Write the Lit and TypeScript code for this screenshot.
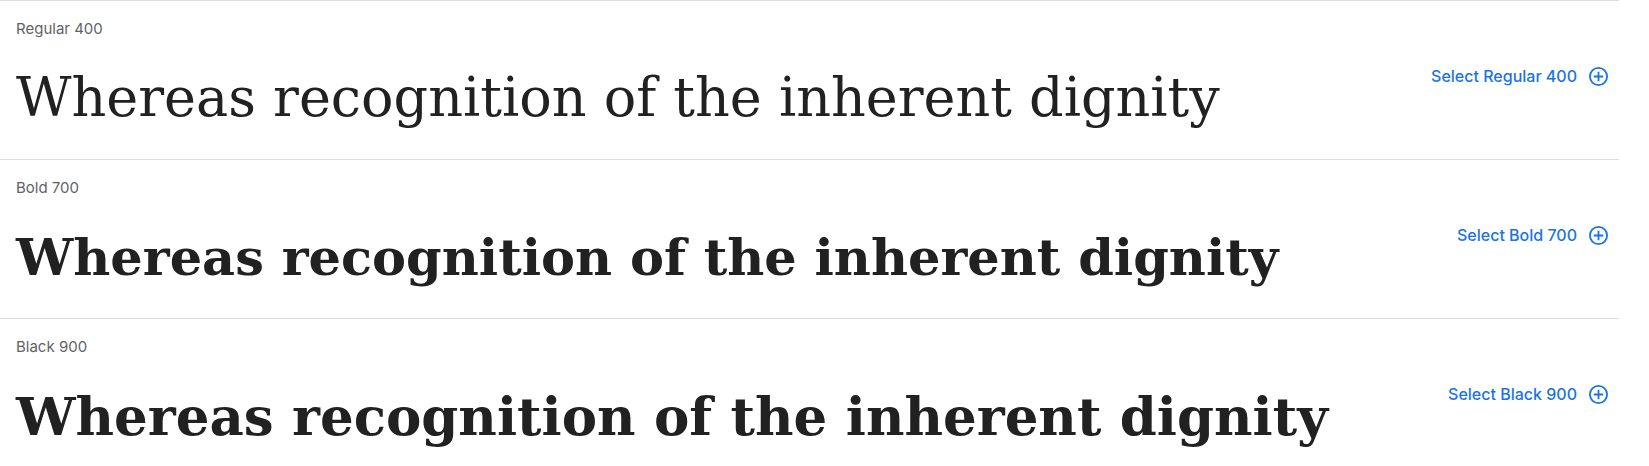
import { LitElement, html, css } from "lit";
import { customElement } from "lit/decorators.js";

interface FontStyle {
  name: string;
  weight: number;
}

const STYLES: FontStyle[] = [
  { name: "Regular", weight: 400 },
  { name: "Bold", weight: 700 },
  { name: "Black", weight: 900 },
];

@customElement("app-root")
export class AppRoot extends LitElement {
  static styles = css`
    :host {
      display: block;
      background: #fff;
      font-family: Inter, sans-serif;
    }
    .list {
      margin: 0 30px 0 0;
      padding: 0;
      list-style: none;
    }
    .row {
      display: flex;
      align-items: flex-start;
      justify-content: space-between;
      padding: 16px 11px 19px 16px;
      border-top: 1px solid #dadce0;
    }
    .row:last-child {
      padding-bottom: 0;
    }
    .name {
      margin: 0;
      font-size: 15px;
      font-weight: 400;
      line-height: 24px;
      color: #5f6368;
    }
    .sample {
      margin: 15px 0 0;
      font-family: "DejaVu Serif", serif;
      font-size: 54px;
      line-height: 84px;
      white-space: nowrap;
      color: #212121;
    }
    .w400 {
      font-weight: 400;
    }
    .w700 {
      font-size: 51px;
      font-weight: 700;
    }
    .w900 {
      font-size: 53px;
      font-weight: 900;
    }
    .select {
      display: flex;
      align-items: center;
      gap: 12px;
      margin-top: 47px;
      padding: 0;
      border: 0;
      background: none;
      font: 500 16px/24px Inter, sans-serif;
      white-space: nowrap;
      color: #1a73e8;
      cursor: pointer;
    }
    .icon {
      display: block;
      width: 19px;
      height: 19px;
    }
  `;

  render() {
    return html`
      <ul class="list">
        ${STYLES.map(
          (s) => html`
            <li class="row">
              <div>
                <h2 class="name">${s.name} ${s.weight}</h2>
                <p class="sample w${s.weight}">Whereas recognition of the inherent dignity</p>
              </div>
              <button class="select" type="button">
                <span>Select ${s.name} ${s.weight}</span>
                <svg class="icon" viewBox="0 0 19 19" fill="none" stroke="currentColor" aria-hidden="true">
                  <circle cx="9.5" cy="9.5" r="8.6" stroke-width="1.8" />
                  <path d="M9.5 4.8v9.4M4.8 9.5h9.4" stroke-width="1.8" />
                </svg>
              </button>
            </li>
          `
        )}
      </ul>
    `;
  }
}
